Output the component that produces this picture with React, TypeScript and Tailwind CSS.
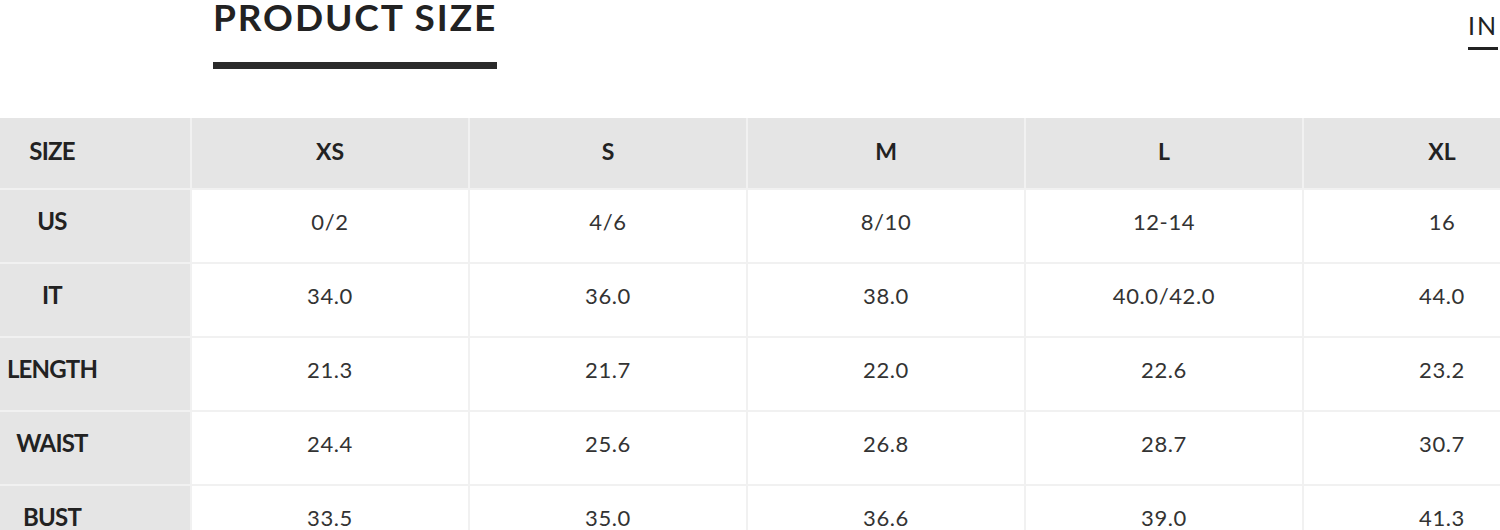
import React from "react";

const cols = ["XS", "S", "M", "L", "XL"];
const rows: [string, string[]][] = [
  ["US", ["0/2", "4/6", "8/10", "12-14", "16"]],
  ["IT", ["34.0", "36.0", "38.0", "40.0/42.0", "44.0"]],
  ["LENGTH", ["21.3", "21.7", "22.0", "22.6", "23.2"]],
  ["WAIST", ["24.4", "25.6", "26.8", "28.7", "30.7"]],
  ["BUST", ["33.5", "35.0", "36.6", "39.0", "41.3"]],
];

export default function App() {
  return (
    <div
      className="w-[1500px] h-[530px] overflow-hidden bg-white text-[#333]"
      style={{ fontFamily: "Lato, 'Open Sans', sans-serif" }}
    >
      <div className="flex justify-between items-start h-[118px]">
        <div className="ml-[213px] flex flex-col items-start">
          <div className="text-[37px] leading-none font-bold tracking-[1.9px] text-[#222] mt-[-2px] w-[285px] whitespace-nowrap">
            PRODUCT SIZE
          </div>
          <div className="mt-[27px] w-[284px] h-[7px] bg-[#2a2a2a]" />
        </div>
        <div className="mr-[2px] mt-[11px] flex flex-col items-stretch">
          <div className="text-[25px] leading-[28px] tracking-[2px] text-[#222]">IN</div>
          <div className="mt-[8px] h-[3px] bg-[#222]" />
        </div>
      </div>
      <div className="ml-[-86px] w-[1666px] grid grid-cols-6 gap-[2px] bg-[#f1f1f1]">
        <div className="h-[70px] pb-[4px] bg-[#e5e5e5] flex items-center justify-center text-[24px] font-bold tracking-[-0.8px] text-[#222]">
          SIZE
        </div>
        {cols.map((c) => (
          <div
            key={c}
            className="h-[70px] pb-[4px] bg-[#e5e5e5] flex items-center justify-center text-[23px] font-bold text-[#222]"
          >
            {c}
          </div>
        ))}
        {rows.map(([label, vals]) => (
          <React.Fragment key={label}>
            <div className="h-[72px] pb-[10px] bg-[#e5e5e5] flex items-center justify-center text-[24px] font-bold text-[#222] tracking-[-0.8px]">
              {label}
            </div>
            {vals.map((v, i) => (
              <div
                key={i}
                className="h-[72px] pb-[10px] bg-white flex items-center justify-center text-[22px] tracking-[0.6px] text-[#333]"
              >
                {v}
              </div>
            ))}
          </React.Fragment>
        ))}
      </div>
    </div>
  );
}
